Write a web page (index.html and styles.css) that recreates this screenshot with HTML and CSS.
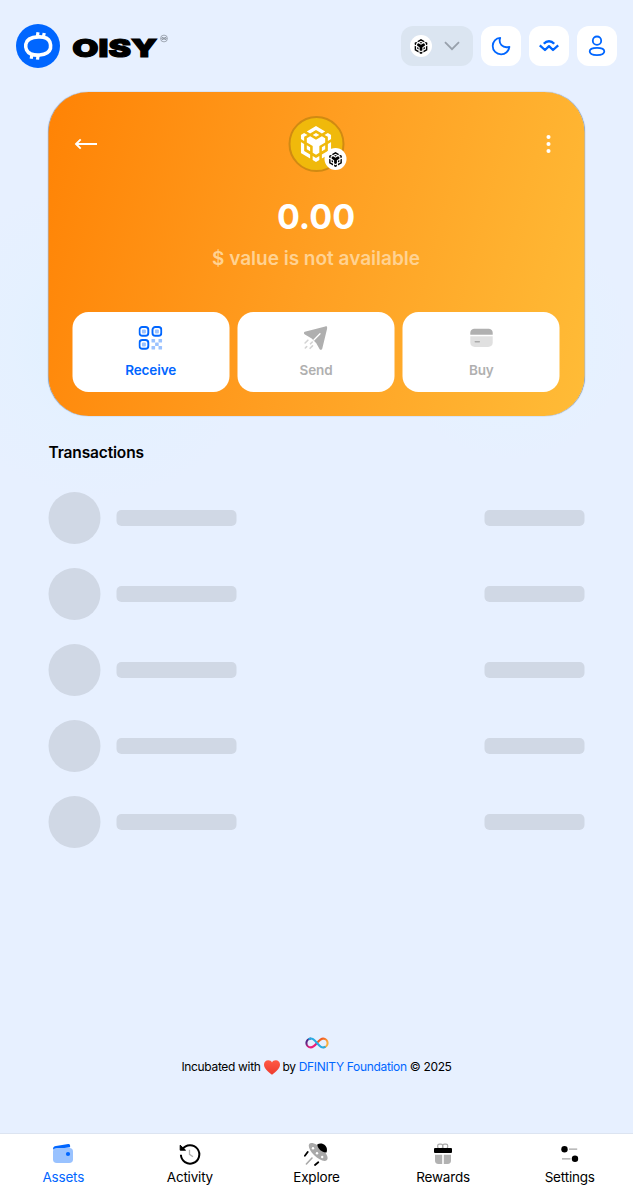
FILE: index.html
```html
<!DOCTYPE html>
<html lang="en">
<head>
<meta charset="utf-8">
<title>OISY</title>
<link rel="stylesheet" href="styles.css">
</head>
<body>
<svg width="0" height="0" class="defs" aria-hidden="true">
  <symbol id="bnb" viewBox="3.58 2.8 16.7 19.78">
    <path d="M5.414 12.625L5.43 16.486L8.71 18.416V20.676L3.587 17.671V11.54L5.414 12.625ZM5.414 8.77V11.022L3.586 9.937V7.685L5.414 6.6L7.25 7.685L5.414 8.77ZM10.098 7.685L11.926 6.6L13.763 7.685L11.926 8.77L10.098 7.685ZM6.87 15.64V13.38L8.698 14.465V16.717L6.87 15.64ZM10.098 19.237L11.926 20.322L13.763 19.237V21.489L11.926 22.574L10.098 21.489V19.237ZM16.61 7.685L18.438 6.6L20.275 7.685V9.937L18.438 11.022V8.77L16.61 7.685ZM18.438 16.486L18.455 12.625L20.283 11.54V17.671L15.159 20.676V18.416L18.438 16.486ZM16.983 15.64L15.155 16.717V14.465L16.983 13.38V15.64ZM16.983 9.555V11.815L13.771 13.745V17.563L11.943 18.648L10.115 17.563V13.745L6.878 11.815V9.555L8.714 8.47L11.934 10.41L15.162 8.47L16.983 9.555ZM6.87 5.817L11.926 2.8L16.983 5.817L15.155 6.902L11.926 4.97L8.698 6.902L6.87 5.817Z" fill="currentColor"/>
  </symbol>
</svg>

<div class="app">
  <header class="header">
    <div class="brand">
      <svg width="44" height="44" viewBox="0 0 44 44">
        <circle cx="22" cy="22" r="22" fill="#0066ff"/>
        <g fill="none" stroke="#fff" stroke-linecap="butt">
          <path d="M22.300 12.900C28 12.600 32.300 14 33.900 18C35.200 21.700 35 26 31.200 28.800C27.500 31.200 20 32 15 30C10.800 28.200 9.200 24 9.800 20.300C10.600 15.400 16 13.200 22.300 12.900Z" stroke-width="3.600"/>
          <path d="M21.300 12.700L22 8.200M27.300 13.300L28.200 9M16 30L15.200 34.800M22.200 30.500L21.500 35.600" stroke-width="3.200"/>
        </g>
      </svg>
      <svg class="wordmark" width="97" height="30" viewBox="0 0 97 30">
        <text class="logo-text" x=".3" y="25.800" textLength="85" lengthAdjust="spacingAndGlyphs">OISY</text>
        <circle cx="92" cy="7.500" r="3.400" fill="none" stroke="#707782" stroke-width=".6"/>
        <path d="M92 7.500C90.900 6.100 89.900 6.400 89.900 7.500S90.900 8.900 92 7.500S94.100 6.400 94.100 7.500S93.100 8.900 92 7.500Z" fill="none" stroke="#50565f" stroke-width=".7"/>
      </svg>
    </div>
    <div class="tools">
      <div class="network">
        <span class="chip"><svg width="14" height="15"><use href="#bnb"/></svg></span>
        <svg width="16" height="10" viewBox="0 0 16 10"><path d="M1 1.200L8 8.200L15 1.200" fill="none" stroke="#98a1ac" stroke-width="1.800"/></svg>
      </div>
      <div class="tool"><svg width="20" height="20" viewBox="0 0 20 20"><path d="M9.200 1.900C7.200 7.500 11.500 12.800 18.400 10.800C17.800 15.300 14.300 18.300 10.100 18.300C5.400 18.300 1.700 14.700 1.700 10.100C1.700 5.600 5 2.100 9.200 1.900Z"/></svg></div>
      <div class="tool"><svg width="20" height="20" viewBox="0 0 20 20"><path d="M.8 9.300L6 14L10 10.200L14 14L19.200 9.300M4.800 7.700C7.800 4.400 12.200 4.400 15.200 7.700" stroke-width="2.300"/></svg></div>
      <div class="tool"><svg width="20" height="22" viewBox="0 0 20 22"><circle cx="10" cy="5.700" r="4.200"/><path d="M10 12.800C14.700 12.800 17.300 14 17.300 16.300C17.300 18.700 14.700 20.100 10 20.100S2.700 18.700 2.700 16.300C2.700 14 5.300 12.800 10 12.800Z"/></svg></div>
    </div>
  </header>

  <main class="main">
    <section class="card">
      <div class="card-top">
        <svg width="23" height="12" viewBox="0 0 23 12"><path d="M22.500 6H1.500M6.200 1.300L1.500 6L6.200 10.700" fill="none" stroke="#fff" stroke-width="1.900"/></svg>
        <div class="token">
          <svg width="31" height="36"><use href="#bnb"/></svg>
          <span class="chip token-network"><svg width="14" height="15"><use href="#bnb"/></svg></span>
        </div>
        <svg width="6" height="20" viewBox="0 0 6 20" fill="#fff"><circle cx="3" cy="3" r="2.050"/><circle cx="3" cy="10" r="2.050"/><circle cx="3" cy="17" r="2.050"/></svg>
      </div>
      <div class="balance">0.00</div>
      <div class="fiat">$ value is not available</div>
      <div class="actions">
        <div class="action primary">
          <svg width="24" height="24" viewBox="0 0 24 24" fill="none" stroke="#0066ff" stroke-width="1.900">
            <rect x="1" y="1" width="8.800" height="8.800" rx="2.800"/><rect x="14" y="1" width="8.800" height="8.800" rx="2.800"/><rect x="1" y="14" width="8.800" height="8.800" rx="2.800"/>
            <g stroke="none" fill="#9bc2ff"><rect x="3.400" y="3.400" width="4" height="4" rx="1"/><rect x="16.400" y="3.400" width="4" height="4" rx="1"/><rect x="3.400" y="16.400" width="4" height="4" rx="1"/><rect x="13" y="13" width="3.600" height="3.600" rx=".6"/><rect x="20" y="13" width="3.600" height="3.600" rx=".6"/><rect x="16.600" y="16.500" width="3.600" height="3.600" rx=".6"/><rect x="13" y="20" width="3.600" height="3.600" rx=".6"/><rect x="20" y="20" width="3.600" height="3.600" rx=".6"/></g>
          </svg>
          <span>Receive</span>
        </div>
        <div class="action">
          <svg width="24" height="24" viewBox="0 0 24 24">
            <path d="M1.300 5.700L21.800 .4C23.200 .1 24 .9 23.700 2.200L18.800 22.500C18.400 24 16.800 24.200 16 22.900L12.800 17.200L8.200 12.500L1.400 8.500C.1 7.700 0 6.100 1.300 5.700Z" fill="#afafaf"/>
            <path d="M10.400 14L16.500 7.700" stroke="#fff" stroke-width="1.300" stroke-linecap="round"/>
            <path d="M1.600 17L4.400 14.200M7 17.800L8.800 16M1.800 22L3.200 20.600M6.600 22.300L9 19.900" stroke="#d3d3d3" stroke-width="1.600" stroke-linecap="round"/>
          </svg>
          <span>Send</span>
        </div>
        <div class="action">
          <svg width="24" height="24" viewBox="0 0 24 24"><path d="M.8 7.200C.8 4 3 2.800 5.400 2.800H18.600C21 2.800 23.200 4 23.200 7.200V8.700H.8Z" fill="#b0b0b0"/><path d="M.8 10.300H23.200V16.600C23.200 19.500 21.400 21 18.600 21H5.400C2.600 21 .8 19.500 .8 16.600Z" fill="#e0e0e0"/><path d="M5.800 15.700H9.800" stroke="#aaa" stroke-width="1.600" stroke-linecap="round"/></svg>
          <span>Buy</span>
        </div>
      </div>
    </section>

    <h2 class="title">Transactions</h2>
    <div class="rows">
      <div class="row"><i class="avatar"></i><i class="bar wide"></i><i class="bar"></i></div>
      <div class="row"><i class="avatar"></i><i class="bar wide"></i><i class="bar"></i></div>
      <div class="row"><i class="avatar"></i><i class="bar wide"></i><i class="bar"></i></div>
      <div class="row"><i class="avatar"></i><i class="bar wide"></i><i class="bar"></i></div>
      <div class="row"><i class="avatar"></i><i class="bar wide"></i><i class="bar"></i></div>
    </div>
  </main>

  <footer class="footer">
    <svg width="24" height="12" viewBox="0 0 24 12">
      <defs>
        <linearGradient id="left" x1="0" y1="0" x2="1" y2="1"><stop offset=".2" stop-color="#522785"/><stop offset=".65" stop-color="#ed1e79"/></linearGradient>
        <linearGradient id="right" x1="0" y1="0" x2="1" y2="1"><stop offset=".2" stop-color="#f15a24"/><stop offset=".7" stop-color="#fbb03b"/></linearGradient>
      </defs>
      <g fill="none" stroke-width="2.100">
        <path d="M12 6C9.500 9 8 10.400 5.800 10.400A4.400 4.400 0 0 1 5.800 1.600" stroke="url(#left)"/>
        <path d="M12 6C14.500 3 16 1.600 18.200 1.600A4.400 4.400 0 0 1 18.200 10.400" stroke="url(#right)"/>
        <path d="M3.500 2.300C7 .2 9.300 2.800 12 6S17 11.800 20.500 9.700" stroke="#29abe2"/>
      </g>
    </svg>
    <div class="credit">
      <span>Incubated with</span>
      <svg width="16" height="15" viewBox="0 0 16 15"><defs><linearGradient id="heart" x2="0" y2="1"><stop stop-color="#ff5a45"/><stop offset="1" stop-color="#ed3b2e"/></linearGradient></defs><path d="M8 14.700C3.500 11.300 0 8.300 0 4.500C0 1.900 1.900 .2 4.200 .2C6 .2 7.400 1.100 8 2.500C8.600 1.100 10 .2 11.800 .2C14.100 .2 16 1.900 16 4.500C16 8.300 12.500 11.300 8 14.700Z" fill="url(#heart)"/></svg>
      <span>by</span><a>DFINITY Foundation</a><span>© 2025</span>
    </div>
  </footer>

  <nav class="nav">
    <div class="tab active"><svg width="24" height="24" viewBox="0 0 24 24"><path d="M2 7.500C2 5 3 4.400 5 4.100L17.200 2.100C18.500 1.900 19.100 2.600 19.100 4V5.200L2 7.500Z" fill="#0066ff"/><path d="M2 9.500C2 7 3.600 5.900 6 5.900H18.500C20.800 5.900 22 7.200 22 9.500V17.200C22 19.700 20.700 21 18.200 21H5.800C3.300 21 2 19.700 2 17.200Z" fill="#99c2ff"/><circle cx="17" cy="12" r="2.100" fill="#0066ff"/></svg><span>Assets</span></div>
    <div class="tab"><svg width="24" height="24" viewBox="0 0 24 24" fill="none"><path d="M4.500 7.200A9.200 9.200 0 1 1 2.900 12.800" stroke="#000" stroke-width="2"/><path d="M2.200 3.200V8.200H7.500Z" fill="#000" stroke="#000" stroke-width="1"/><path d="M11.500 7.700V12.300L15 14.700" stroke="#b0b0b0" stroke-width="1.300"/></svg><span>Activity</span></div>
    <div class="tab"><svg width="24" height="24" viewBox="0 0 24 24"><path d="M5.400 1.700C7.500-.5 14 2.500 18.700 7.200C23.300 12 24.800 16.700 22.700 18.300C20.300 20.100 14.500 17.600 10.200 13.300C5.700 8.900 3.600 3.900 5.400 1.700Z" fill="#a9a9a9"/><path d="M13.200 2.600C18-.5 24.800 4 22.500 10.500C18.500 11 14 7.400 13.200 2.600Z" fill="#000"/><circle cx="9" cy="6.200" r="1.200" fill="#fff"/><circle cx="13" cy="11.300" r="1.200" fill="#fff"/><circle cx="18.200" cy="15" r="1.200" fill="#fff"/><path d="M.9 13.700L3.700 10M11 23L14.300 20.300" stroke="#000" stroke-width="1.800" stroke-linecap="round"/><path d="M2.400 22L8 16" stroke="#a9a9a9" stroke-width="1.600" stroke-linecap="round"/></svg><span>Explore</span></div>
    <div class="tab"><svg width="24" height="24" viewBox="0 0 24 24"><rect x="6.700" y="2.100" width="5" height="4.500" rx="1.700" fill="none" stroke="#aaa" stroke-width="1.200"/><rect x="11.700" y="2.100" width="5" height="4.500" rx="1.700" fill="none" stroke="#aaa" stroke-width="1.200"/><rect x="3" y="6" width="18" height="5" rx="1" fill="#000"/><path d="M4 12.700H11.200V22H7.500C5 22 4 20.800 4 18.500ZM12.800 12.700H20V18.500C20 20.800 19 22 16.500 22H12.800Z" fill="#b2b2b2"/></svg><span>Rewards</span></div>
    <div class="tab"><svg width="24" height="24" viewBox="0 0 24 24"><path d="M11 7.200H19.200M4 16.800H12.500" stroke="#a5a5a5" stroke-width="1.300"/><circle cx="6.500" cy="7.200" r="3.200"/><circle cx="17" cy="16.800" r="3.200"/></svg><span>Settings</span></div>
  </nav>
</div>
</body>
</html>
```
FILE: styles.css
```css
* { box-sizing: border-box; }
body { margin: 0; background: #e7f0ff; color: #000; font-family: Inter, "Noto Sans", sans-serif; }
svg { display: block; flex: none; }
.defs { display: none; }
.app { height: 1194px; display: flex; flex-direction: column; background: radial-gradient(circle at 100px 340px, #dff0ff 0, #e3f1ff80 90px, #e3f1ff00 160px), radial-gradient(circle at 510px 340px, #e3f3ff 0, #e3f3ff00 120px); }
.header { height: 92px; padding: 0 16px; display: flex; align-items: center; justify-content: space-between; }
.brand { display: flex; align-items: center; gap: 12px; }
.wordmark { overflow: visible; }
.logo-text { font: 900 25px Inter, sans-serif; stroke: #000; stroke-width: 1.1px; }
.tools { display: flex; gap: 8px; }
.network { width: 72px; height: 40px; border-radius: 12px; background: #dbe5f1; display: flex; align-items: center; justify-content: space-between; padding: 0 13px 0 9px; }
.chip { width: 22px; height: 22px; border-radius: 50%; background: #fff; color: #000; display: flex; align-items: center; justify-content: center; }
.tool { width: 40px; height: 40px; border-radius: 12px; background: #fff; display: flex; align-items: center; justify-content: center; }
.tool svg { fill: none; stroke: #0066ff; stroke-width: 1.8; stroke-linejoin: round; }
.main { width: 536px; margin: 0 auto; }
.card { height: 324px; border-radius: 40px; padding: 24px; background: linear-gradient(105deg, #ff8305 0%, #ff9f22 50%, #ffbc37 100%); box-shadow: 0 0 1px #52719b; display: flex; flex-direction: column; align-items: center; transform: translateX(-.5px); }
.card-top { width: 100%; height: 56px; display: grid; grid-template-columns: 1fr 56px 1fr; align-items: center; }
.card-top > :first-child { margin-left: 2px; }
.card-top > :last-child { justify-self: end; margin-right: 9px; }
.token { position: relative; width: 56px; height: 56px; border-radius: 50%; border: 2px solid #d18a12; background: #f0b90b; color: #fff; display: flex; align-items: center; justify-content: center; }
.token-network { position: absolute; right: -4px; bottom: 0; }
.balance { height: 56px; margin-top: 17px; color: #fff; font-weight: 700; font-size: 34px; line-height: 56px; letter-spacing: 0; }
.fiat { height: 28px; color: #ffd292; font-weight: 600; font-size: 19px; line-height: 28px; letter-spacing: 0; }
.actions { width: 100%; margin-top: auto; display: grid; grid-template-columns: repeat(3, 1fr); gap: 8px; }
.action { height: 80px; border-radius: 16px; background: #fff; color: #b0b0b0; display: flex; flex-direction: column; align-items: center; padding-top: 14px; gap: 10px; font-weight: 600; font-size: 13.5px; line-height: 20px; letter-spacing: -.1px; }
.primary { color: #0066ff; }
.title { margin: 25px 0 27px; font-weight: 600; font-size: 15.5px; line-height: 24px; letter-spacing: -.15px; }
.rows { display: flex; flex-direction: column; gap: 24px; transform: translateX(-.5px); }
.row { height: 52px; display: flex; align-items: center; }
.avatar { width: 52px; height: 52px; border-radius: 50%; background: #d0d8e5; }
.bar { width: 100px; height: 16px; border-radius: 5px; background: #d0d8e5; margin-left: auto; }
.wide { width: 120px; margin-left: 16px; }
.footer { margin-top: auto; height: 96px; display: flex; flex-direction: column; align-items: center; }
.credit { display: flex; align-items: center; margin-top: 8px; font-size: 12px; line-height: 20px; letter-spacing: -.33px; white-space: nowrap; }
.credit svg { margin: 0 3px; }
.credit a { color: #0066ff; margin: 0 3px; }
.nav { height: 61px; border-top: 1px solid #dce4f1; background: #fff; display: grid; grid-template-columns: repeat(5, 1fr); }
.tab { display: flex; flex-direction: column; align-items: center; padding-top: 8px; font-size: 13.5px; line-height: 20px; letter-spacing: -.2px; gap: 1px; }
.active { color: #0066ff; }
```
